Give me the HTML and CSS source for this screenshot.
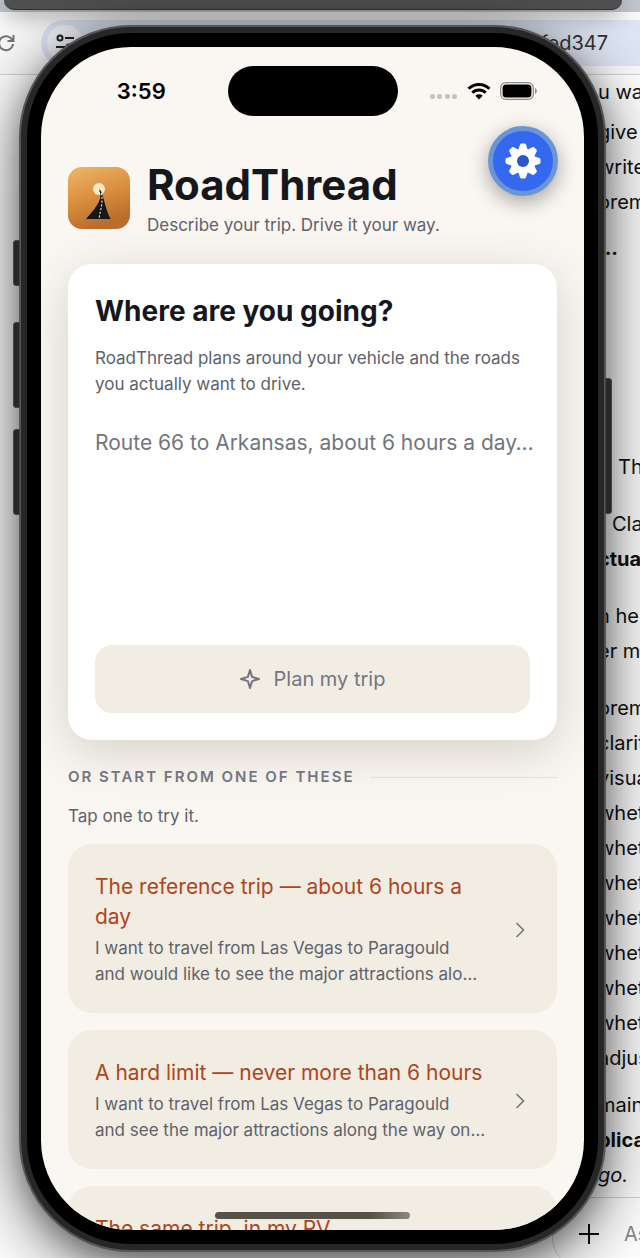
FILE: index.html
```html
<!DOCTYPE html>
<html lang="en">
<head>
    <meta charset="UTF-8">
    <meta name="viewport" content="width=device-width, initial-scale=1.0">
    <title>RoadThread</title>
    <link rel="stylesheet" href="styles.css">
</head>
<body>
    <!-- Browser window behind the phone -->
    <div class="browser">
        <div class="toolbar">
            <button class="reload" aria-label="Reload">
                <svg width="18" height="18" viewBox="0 0 18 18" fill="none" stroke="#777" stroke-width="2">
                    <path d="M15.5 6.5A7 7 0 1 0 16 10M16.500 1v6h-6"/>
                </svg>
            </button>
            <div class="address">
                <span class="site-info">
                    <svg width="20" height="20" viewBox="0 0 20 20" fill="none" stroke="#222" stroke-width="2">
                        <circle cx="5" cy="5" r="2.500"/><path d="M10 5h9M1 14h9"/><circle cx="14" cy="14" r="2.500"/>
                    </svg>
                </span>
                <span class="url">fed347</span>
            </div>
        </div>
        <div class="chat">
            <p class="tight">u wa</p>
            <p>give<br>write<br>orem</p>
            <p class="dots">···</p>
            <p class="indent">Th</p>
            <p><span class="nudge">Cla</span><br><b>ctua</b></p>
            <p>n he<br>er m</p>
            <p class="list">orem<br>clarit<br>visua<br>whet<br>whet<br>whet<br>whet<br>whet<br>whet<br>whet<br>adjus</p>
            <p>main<br><b>plica</b><br><i>go.</i></p>
        </div>
        <div class="composer">
            <button class="plus" aria-label="Add">
                <svg width="20" height="20" viewBox="0 0 20 20" stroke="#111" stroke-width="2"><path d="M10 0v20M0 10h20"/></svg>
            </button>
            <span>As</span>
        </div>
    </div>
    <div class="top-window"></div>

    <!-- Phone -->
    <div class="phone">
        <i class="side-key action"></i>
        <i class="side-key volume-up"></i>
        <i class="side-key volume-down"></i>
        <i class="side-key power"></i>

        <div class="screen">
            <div class="status-bar">
                <span class="time">3:59</span>
                <span class="island"></span>
                <span class="status-icons">
                    <svg width="28" height="18" viewBox="0 0 28 18" fill="#c6c4c0">
                        <rect x="0" y="12" width="5" height="5" rx="2"/><rect x="7" y="12" width="5" height="5" rx="2"/>
                        <rect x="15" y="12" width="5" height="5" rx="2"/><rect x="22" y="12" width="5" height="5" rx="2"/>
                    </svg>
                    <svg width="24" height="18" viewBox="0 0 24 18" fill="none" stroke="#000" stroke-width="3">
                        <path d="M1.500 6.800a15 15 0 0 1 21 0M5.300 10.700a9.600 9.600 0 0 1 13.400 0"/>
                        <path d="M12 17.500l-3.700-3.700a5.400 5.400 0 0 1 7.400 0z" fill="#000" stroke="none"/>
                    </svg>
                    <svg width="37" height="18" viewBox="0 0 37 18">
                        <rect x=".7" y=".7" width="32.600" height="16.600" rx="5" fill="none" stroke="#8e8c89" stroke-width="1.300"/>
                        <rect x="2.600" y="2.600" width="28.800" height="12.800" rx="3.500"/>
                        <path d="M35 6c2.400 1 2.400 5 0 6z" fill="#8e8c89"/>
                    </svg>
                </span>
            </div>

            <button class="settings" aria-label="Settings">
                <svg width="36" height="36" viewBox="-18 -18 36 36">
                    <g fill="#fff">
                        <circle r="12.500"/>
                        <path id="tooth" d="M-4.800-11L-3-16.300Q-2.600-17.500-1.500-17.500H1.500Q2.600-17.500 3-16.300L4.800-11z"/>
                        <use href="#tooth" transform="rotate(45)"/>
                        <use href="#tooth" transform="rotate(90)"/>
                        <use href="#tooth" transform="rotate(135)"/>
                        <use href="#tooth" transform="rotate(180)"/>
                        <use href="#tooth" transform="rotate(225)"/>
                        <use href="#tooth" transform="rotate(270)"/>
                        <use href="#tooth" transform="rotate(315)"/>
                    </g>
                    <circle r="6" fill="#2b57c8"/>
                </svg>
            </button>

            <main class="content">
                <header class="brand">
                    <svg class="logo" viewBox="0 0 62 62">
                        <defs>
                            <linearGradient id="sunset" x1="0" y1="0" x2=".35" y2="1">
                                <stop offset="0" stop-color="#edb768"/>
                                <stop offset=".55" stop-color="#d98f3e"/>
                                <stop offset="1" stop-color="#b86d2a"/>
                            </linearGradient>
                        </defs>
                        <rect width="62" height="62" rx="14" fill="url(#sunset)"/>
                        <circle cx="31" cy="22" r="6" fill="#fce8c6"/>
                        <path d="M31 22.500C35 31 30.500 38 18 52H42.500C37.500 42 36 31 33 24Q32.300 22.500 31 22.500z" fill="#15171a"/>
                        <path d="M33.200 26C35.500 35 32.500 42 31 52" fill="none" stroke="#f6ead4" stroke-width="1.100" stroke-dasharray="2.200 1.600"/>
                    </svg>
                    <div>
                        <h1>RoadThread</h1>
                        <p class="body-text">Describe your trip. Drive it your way.</p>
                    </div>
                </header>

                <section class="planner">
                    <h2><label for="trip">Where are you going?</label></h2>
                    <p class="body-text">RoadThread plans around your vehicle and the roads you actually want to drive.</p>
                    <textarea id="trip" placeholder="Route 66 to Arkansas, about 6 hours a day…"></textarea>
                    <button class="plan">
                        <svg width="20" height="20" viewBox="0 0 20 20" fill="none" stroke="#717680" stroke-width="2" stroke-linejoin="round">
                            <path d="M10 1L12.100 7.900L19 10L12.100 12.100L10 19L7.900 12.100L1 10L7.900 7.900z"/>
                        </svg>
                        Plan my trip
                    </button>
                </section>

                <h3 class="divider">OR START FROM ONE OF THESE</h3>
                <p class="body-text">Tap one to try it.</p>

                <div class="examples">
                    <button class="example">
                        <span class="example-text">
                            <span class="example-title">The reference trip — about 6 hours a day</span>
                            <span class="example-desc body-text">I want to travel from Las Vegas to Paragould<br>and would like to see the major attractions along the way.</span>
                        </span>
                        <svg width="10" height="16" viewBox="0 0 10 16" fill="none" stroke="#717680" stroke-width="1.600"><path d="M1.500 1L8.500 8L1.500 15"/></svg>
                    </button>
                    <button class="example">
                        <span class="example-text">
                            <span class="example-title">A hard limit — never more than 6 hours</span>
                            <span class="example-desc body-text">I want to travel from Las Vegas to Paragould<br>and see the major attractions along the way on Route 66.</span>
                        </span>
                        <svg width="10" height="16" viewBox="0 0 10 16" fill="none" stroke="#717680" stroke-width="1.600"><path d="M1.500 1L8.500 8L1.500 15"/></svg>
                    </button>
                    <button class="example">
                        <span class="example-text">
                            <span class="example-title">The same trip, in my RV</span>
                        </span>
                    </button>
                </div>
            </main>
            <span class="home-bar"></span>
        </div>
    </div>
</body>
</html>
```
FILE: styles.css
```css
* {
    box-sizing: border-box;
}
body {
    margin: 0;
    height: 100vh;
    overflow: hidden;
    position: relative;
    display: flex;
    padding: 25px 34px 6px 19px;
    background: #c3c8d0;
    font-family: Inter, "Liberation Sans", sans-serif;
    color: #15171c;
}
button {
    border: 0;
    padding: 0;
    font: inherit;
    color: inherit;
    background: none;
    cursor: pointer;
}
h1, h2, h3, p {
    margin: 0;
}
svg {
    display: block;
    flex: none;
}

/* Windows behind the phone */
.browser {
    position: absolute;
    inset: 12px 0 0;
    display: flex;
    flex-direction: column;
    overflow: hidden;
    background: #fff;
    font-size: 20px;
}
.toolbar {
    display: flex;
    align-items: center;
    gap: 26px;
    height: 63px;
    flex: none;
    border-bottom: 1px solid #d4d4d4;
    background: #fbfbfc;
}
.reload {
    margin-left: -3px;
}
.address {
    flex: 1;
    display: flex;
    align-items: center;
    justify-content: space-between;
    height: 46px;
    padding: 0 32px 0 6px;
    border-radius: 23px 0 0 23px;
    background: #dfe6f5;
    color: #333;
}
.site-info {
    display: flex;
    align-items: center;
    justify-content: center;
    width: 36px;
    height: 36px;
    border-radius: 50%;
    background: #f3f5fa;
}
.chat {
    flex: 1;
    min-height: 0;
    align-self: flex-end;
    width: 42px;
    white-space: nowrap;
    line-height: 35px;
    color: #111;
}
.chat p {
    margin-bottom: 22px;
}
.chat .tight {
    margin-bottom: 5px;
}
.chat .tight + p {
    margin-bottom: 16px;
}
.chat .dots {
    margin-bottom: 179px;
    font-weight: 700;
}
.chat .list {
    margin-bottom: 12px;
}
.indent {
    padding-left: 20px;
}
.nudge {
    padding-left: 14px;
}
.composer {
    align-self: flex-end;
    display: flex;
    align-items: center;
    gap: 25px;
    width: 88px;
    height: 72px;
    flex: none;
    margin-bottom: -11px;
    padding-left: 26px;
    border: 1px solid #d4d4d4;
    border-width: 1px 0 0 1px;
    border-radius: 32px 0 0 32px;
    color: #888;
    white-space: nowrap;
}
.top-window {
    position: absolute;
    inset: 0 18px auto 4px;
    height: 10px;
    border-radius: 0 0 12px 12px;
    background: #505050;
    border-bottom: 1px solid #333;
    box-shadow: 0 2px 24px rgba(0, 0, 0, .6);
}

/* Phone */
.phone {
    position: relative;
    flex: 1;
    min-width: 0;
    display: flex;
    padding: 6px;
    border: 2px solid #555;
    border-radius: 112px;
    background: #272727;
    box-shadow: 0 16px 70px rgba(0, 0, 0, .6), 0 8px 24px rgba(0, 0, 0, .25);
}
.screen {
    position: relative;
    flex: 1;
    min-width: 0;
    border: 14px solid #000;
    border-radius: 104px;
    background: #faf7f2;
    overflow: hidden;
}
.side-key {
    position: absolute;
    left: -8px;
    width: 7px;
    border: 1px solid #444;
    border-radius: 3px 0 0 3px;
    background: #272727;
}
.action {
    top: 213px;
    height: 46px;
}
.volume-up {
    top: 295px;
    height: 86px;
}
.volume-down {
    top: 402px;
    height: 86px;
}
.power {
    left: auto;
    right: -8px;
    top: 351px;
    height: 136px;
    border-radius: 0 3px 3px 0;
}
.status-bar {
    display: grid;
    grid-template-columns: 1fr 170px 1fr;
    align-items: center;
    height: 50px;
    margin-top: 19px;
}
.time {
    padding-left: 14px;
    text-align: center;
    font-size: 22px;
    font-weight: 600;
    color: #000;
}
.island {
    height: 50px;
    border-radius: 25px;
    background: #000;
}
.status-icons {
    display: flex;
    gap: 9px;
    padding-left: 32px;
}
.settings {
    position: absolute;
    top: 79px;
    right: 26px;
    display: flex;
    align-items: center;
    justify-content: center;
    width: 70px;
    height: 70px;
    border: 5px solid #6b96d6;
    border-radius: 50%;
    background: #3468ee;
    box-shadow: 0 6px 20px rgba(0, 0, 0, .35);
}

/* App content */
.content {
    display: flex;
    flex-direction: column;
    padding: 42px 27px 0;
}
.body-text {
    font-size: 17px;
    line-height: 26px;
    color: #5d626d;
}
.brand {
    display: flex;
    align-items: center;
    gap: 17px;
}
.logo {
    width: 62px;
    height: 62px;
}
h1 {
    font-size: 42px;
    line-height: 54px;
    font-weight: 700;
}
.planner {
    display: flex;
    flex-direction: column;
    margin-top: 26px;
    padding: 27px;
    border-radius: 24px;
    background: #fff;
    box-shadow: 0 12px 50px rgba(70, 60, 30, .2);
}
h2 {
    margin-bottom: 14px;
    font-size: 28px;
    line-height: 40px;
    font-weight: 700;
}
textarea {
    height: 200px;
    margin: 32px -8px 16px 0;
    padding: 0;
    border: 0;
    outline: 0;
    resize: none;
    background: none;
    font: 21px/28px Inter, "Liberation Sans", sans-serif;
    overflow: hidden;
}
textarea::placeholder {
    color: #717680;
    opacity: 1;
}
.plan {
    display: flex;
    align-items: center;
    justify-content: center;
    gap: 14px;
    height: 68px;
    border-radius: 17px;
    background: #f1ede2;
    color: #717680;
    font-size: 20px;
}
.divider {
    display: flex;
    align-items: center;
    gap: 16px;
    margin: 27px 0 16px;
    font-size: 15px;
    line-height: 20px;
    letter-spacing: 2px;
    font-weight: 600;
    color: #717680;
}
.divider::after {
    content: "";
    flex: 1;
    height: 1px;
    background: #e8dfd0;
}
.examples {
    display: flex;
    flex-direction: column;
    gap: 17px;
    margin-top: 15px;
}
.example {
    display: flex;
    align-items: center;
    justify-content: space-between;
    gap: 22px;
    padding: 28px 32px 26px 27px;
    border-radius: 24px;
    background: #f1ede2;
    text-align: left;
}
.example-text {
    flex: 1;
    display: flex;
    flex-direction: column;
    gap: 3px;
}
.example-title {
    font-size: 21px;
    line-height: 30px;
    color: #b0441c;
}
.example-desc {
    display: -webkit-box;
    padding-right: 6px;
    -webkit-box-orient: vertical;
    -webkit-line-clamp: 2;
    overflow: hidden;
}
.home-bar {
    position: absolute;
    left: 32%;
    right: 32%;
    bottom: 11px;
    height: 7px;
    border-radius: 4px;
    background: linear-gradient(90deg, #555348 80%, #8b897f);
}
```
